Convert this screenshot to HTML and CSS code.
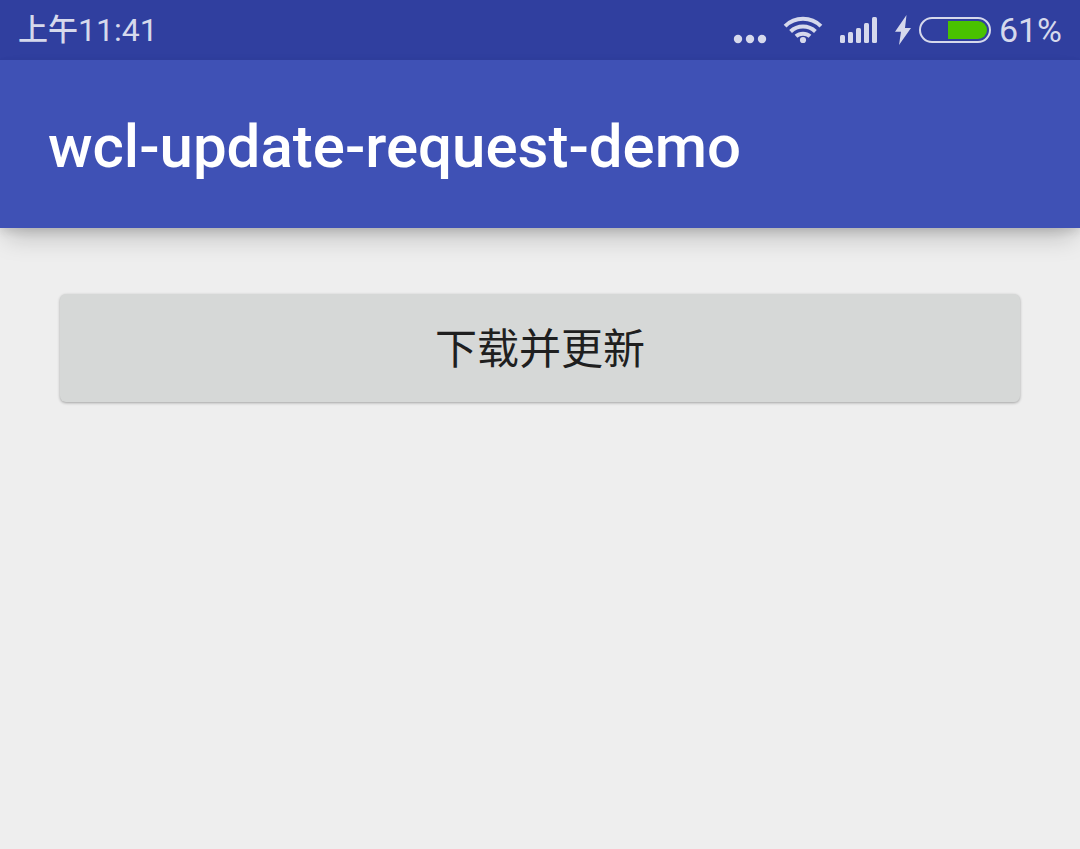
FILE: index.html
```html
<!DOCTYPE html>
<html lang="zh-CN">
<head>
<meta charset="utf-8">
<meta name="viewport" content="width=device-width, initial-scale=1">
<title>wcl-update-request-demo</title>
<link rel="stylesheet" href="styles.css">
</head>
<body>
<div class="status-bar">
  <div class="clock"><span class="period">上午</span><span class="time">11:41</span></div>
  <div class="indicators">
    <svg class="dots" width="34" height="30" viewBox="0 0 34 30" aria-hidden="true">
      <circle cx="5" cy="24" r="4.2"/><circle cx="17" cy="24" r="4.2"/><circle cx="29" cy="24" r="4.2"/>
    </svg>
    <svg class="wifi" width="40" height="30" viewBox="0 0 40 30" aria-hidden="true">
      <g class="arcs">
        <path d="M2.1 11.1a25.500 25.500 0 0 1 35.800 0"/>
        <path d="M7.600 16.500a18 18 0 0 1 24.800 0"/>
        <path d="M13 21.300a10.500 10.500 0 0 1 14 0"/>
      </g>
      <circle cx="20" cy="25" r="3.100"/>
    </svg>
    <svg class="signal" width="38" height="30" viewBox="0 0 38 30" aria-hidden="true">
      <rect x="0" y="20" width="5" height="8" rx="1.500"/>
      <rect x="8" y="17" width="5" height="11" rx="1.500"/>
      <rect x="16" y="13" width="5" height="15" rx="1.500"/>
      <rect x="24" y="8" width="5" height="20" rx="1.500"/>
      <rect x="32" y="2" width="5" height="26" rx="1.500"/>
    </svg>
    <svg class="bolt" width="18" height="30" viewBox="0 0 18 30" aria-hidden="true">
      <path d="M12.500 0 1 16.700h6L5 30 17 13h-6z"/>
    </svg>
    <svg class="battery" width="72" height="26" viewBox="0 0 72 26" aria-hidden="true">
      <rect class="shell" x="1" y="1" width="70" height="24" rx="12"/>
      <path class="charge" d="M29 4h30a9 9 0 0 1 0 18H29z"/>
    </svg>
    <span class="percent">61%</span>
  </div>
</div>
<header class="app-bar"><h1 class="title">wcl-update-request-demo</h1></header>
<main class="content">
  <button class="update-button" type="button">下载并更新</button>
</main>
</body>
</html>
```
FILE: styles.css
```css
* { box-sizing: border-box; }

body {
  margin: 0;
  background: #eee;
  font-family: Roboto, "Noto Sans CJK SC", sans-serif;
}

.status-bar {
  display: flex;
  align-items: center;
  justify-content: space-between;
  height: 60px;
  padding: 0 18px;
  background: #303f9f;
  color: #d6d9ec;
  font-size: 34px;
  line-height: 60px;
}

.clock,
.indicators {
  display: flex;
  align-items: center;
}

.period {
  font-size: 30px;
  font-weight: 500;
}

.time { font-size: 32px; }

.indicators svg { fill: #d6d9ec; }
.dots { margin-right: 16px; }
.wifi { margin-right: 17px; }
.signal { margin-right: 16px; }
.bolt { margin-right: 7px; }
.battery { margin-right: 8px; }

.arcs {
  fill: none;
  stroke: #d6d9ec;
  stroke-width: 4;
}

.indicators .shell {
  fill: none;
  stroke: #d6d9ec;
  stroke-width: 2;
}

.indicators .charge { fill: #49c200; }

.app-bar {
  padding: 51px 48px 45px;
  background: #3f51b5;
  box-shadow: 0 4px 8px rgba(0, 0, 0, 0.1), 0 14px 24px -6px rgba(0, 0, 0, 0.22);
}

.title {
  margin: 0;
  color: #fff;
  font-size: 60px;
  font-weight: 500;
  line-height: 72px;
}

.content {
  display: flex;
  padding: 66px 60px;
}

.update-button {
  flex: 1;
  padding: 22px 24px 26px;
  border: 0;
  border-radius: 6px;
  background: #d6d8d7;
  box-shadow: 0 1px 3px rgba(0, 0, 0, 0.32);
  color: #1f1f1f;
  font-family: "Noto Sans CJK SC", sans-serif;
  font-size: 42px;
  line-height: 60px;
}
```
